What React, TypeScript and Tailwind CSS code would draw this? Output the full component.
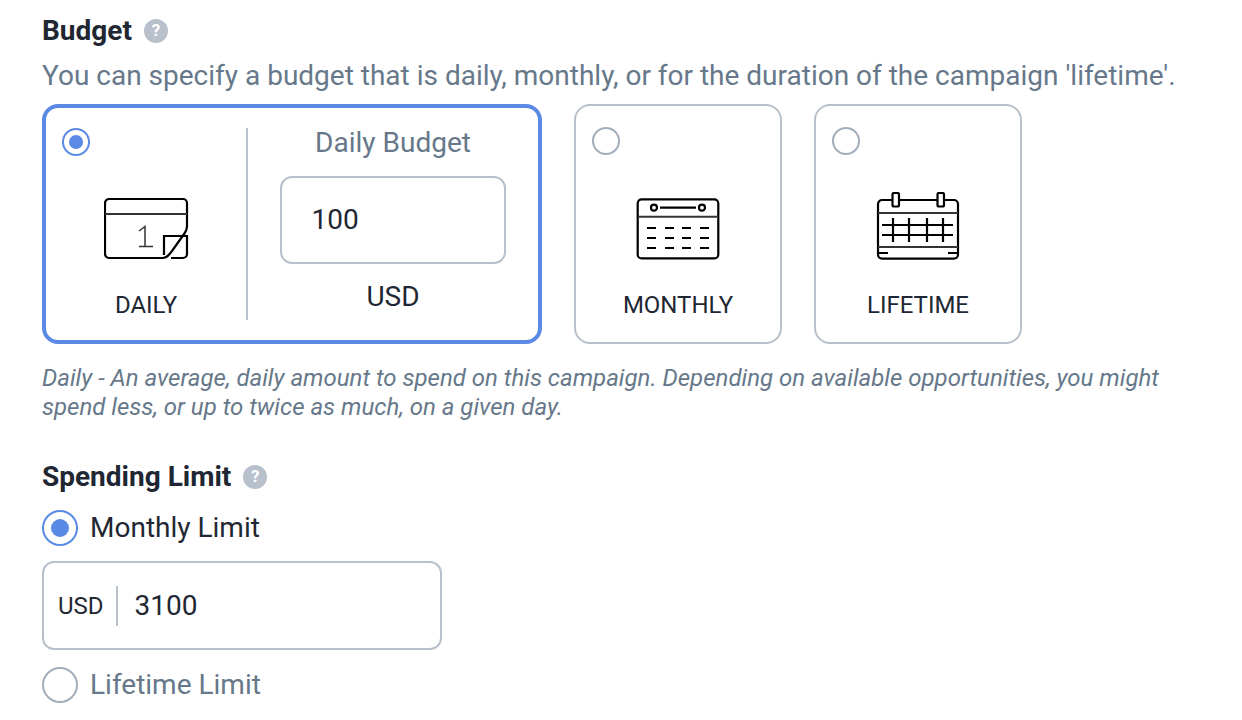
const DailyIcon = () => (
  <svg width="86" height="64" viewBox="0 0 86 64" fill="none" stroke="#000" strokeWidth="2.200">
    <path d="M60 61H5a4 4 0 0 1-4-4V6a4 4 0 0 1 4-4h74a4 4 0 0 1 4 4v23c0 4-2 7-4 9.500L68 54c-3 4-5 7-9 7" />
    <path d="M1 17h82" stroke="#333" strokeWidth="2" />
    <path d="M60 58V39h23v18a4 4 0 0 1-4 4H67" />
    <path d="M35 34l6-4.500V49M35 49.500h14" stroke="#333" strokeWidth="1.500" />
  </svg>
)

const MonthlyIcon = () => (
  <svg width="84" height="64" viewBox="0 0 84 64" fill="none" stroke="#000" strokeWidth="2.200">
    <rect x="1.700" y="1.400" width="80.600" height="59" rx="4" />
    <path d="M2 18.700h80" stroke="#333" strokeWidth="2" />
    <circle cx="18" cy="9.700" r="3" />
    <circle cx="66" cy="9.700" r="3" />
    <path d="M24 9.700h36" />
    <path d="M11 30h9M29 30h9M46 30h9M64 30h9M11 40h9M29 40h9M46 40h9M64 40h9M11 50h9M29 50h9M46 50h9M64 50h9" />
  </svg>
)

const LifetimeIcon = () => (
  <svg width="84" height="70" viewBox="0 0 84 70" fill="none" stroke="#000" strokeWidth="2.200">
    <path d="M16 8H6a4 4 0 0 0-4 4v50.600a4 4 0 0 0 4 4h72a4 4 0 0 0 4-4V12a4 4 0 0 0-4-4H68" />
    <path d="M23 8h38.500" />
    <rect x="16.500" y="1" width="6.500" height="13.500" rx="1.500" />
    <rect x="61.500" y="1" width="6.500" height="13.500" rx="1.500" />
    <path d="M2 21h80M2 55h80" stroke="#333" strokeWidth="2" />
    <path d="M6 33h71M6 43h71M17 26v24M33 26v24M51 26v24M67 26v24" />
    <path d="M2 61h10M72 61h10" />
  </svg>
)

const Help = () => (
  <span className="flex h-6 w-6 items-center justify-center rounded-full bg-[#b8c0cc] text-[17px] font-bold text-white">?</span>
)

const Radio = ({ on, big }: { on?: boolean; big?: boolean }) => (
  <span className={`flex shrink-0 items-center justify-center rounded-full bg-white ${big ? 'h-9 w-9' : 'h-7 w-7'} ${on ? 'border-2 border-[#5a8ae6]' : 'border-2 border-[#a3aebb]'}`}>
    {on && <span className={`rounded-full bg-[#5a8ae6] ${big ? 'h-[18px] w-[18px]' : 'h-[14px] w-[14px]'}`} />}
  </span>
)

const PlainCard = ({ label, children }: { label: string; children: React.ReactNode }) => (
  <div className="flex h-[240px] w-[208px] flex-col rounded-2xl border-2 border-[#b8c0cc] pl-[16px] pt-[21px]">
    <Radio />
    <div className="mt-[37px] flex h-[70px] items-end pl-[44px]">{children}</div>
    <div className="mt-[28px] -ml-[16px] w-[204px] text-center text-[24px] leading-[30px] text-[#1f2733]">{label}</div>
  </div>
)

export default function App() {
  return (
    <div className="min-h-[720px] w-[1242px] overflow-hidden bg-white pl-[42px] pt-[13px] font-['Roboto',sans-serif]">
      <div className="flex items-center gap-3">
        <h2 className="text-[28px] leading-9 font-bold text-[#1f2733]">Budget</h2>
        <Help />
      </div>
      <p className="mt-[9px] text-[28px] leading-[36px] text-[#66788a]">
        You can specify a budget that is daily, monthly, or for the duration of the campaign 'lifetime'.
      </p>
      <div className="mt-[10px] flex gap-8">
        <div className="flex h-[240px] w-[500px] rounded-2xl border-4 border-[#5a8ae6] pt-[20px]">
          <div className="flex h-[192px] w-[202px] flex-col border-r-2 border-[#b8c0cc] pl-[16px]">
            <Radio on />
            <div className="mt-[41px] pl-[42px]"><DailyIcon /></div>
            <div className="mt-[29px] -ml-[16px] text-center text-[24px] leading-[30px] text-[#1f2733]">DAILY</div>
          </div>
          <div className="flex flex-1 flex-col items-center">
            <div className="text-[28px] leading-[30px] text-[#66788a]">Daily Budget</div>
            <div className="mt-[18px] flex h-[88px] w-[226px] items-center rounded-xl border-2 border-[#b8c0cc] px-[29.500px] text-[28px] text-[#1f2733]">100</div>
            <div className="mt-[17px] text-[28px] leading-[32px] text-[#1f2733]">USD</div>
          </div>
        </div>
        <PlainCard label="MONTHLY"><MonthlyIcon /></PlainCard>
        <PlainCard label="LIFETIME"><LifetimeIcon /></PlainCard>
      </div>
      <p className="mt-[20px] w-[1130px] text-[24px] leading-[29px] text-[#66788a] italic">
        Daily - An average, daily amount to spend on this campaign. Depending on available opportunities, you might spend less, or up to twice as much, on a given day.
      </p>
      <div className="mt-[37px] flex items-center gap-3">
        <h2 className="text-[28px] leading-9 font-bold text-[#1f2733]">Spending Limit</h2>
        <Help />
      </div>
      <label className="mt-[15px] flex items-center gap-3">
        <Radio on big />
        <span className="text-[28px] leading-9 text-[#1f2733]">Monthly Limit</span>
      </label>
      <div className="mt-[15px] flex h-[89px] w-[400px] items-center rounded-xl border-2 border-[#b8c0cc] pl-[14px] pr-[15px]">
        <span className="text-[24px] text-[#1f2733]">USD</span>
        <span className="ml-[12px] mr-[17px] h-10 w-0.5 bg-[#b8c0cc]" />
        <span className="text-[28px] text-[#1f2733]">3100</span>
      </div>
      <label className="mt-[17px] flex items-center gap-3">
        <Radio big />
        <span className="text-[28px] leading-9 text-[#66788a]">Lifetime Limit</span>
      </label>
    </div>
  )
}
